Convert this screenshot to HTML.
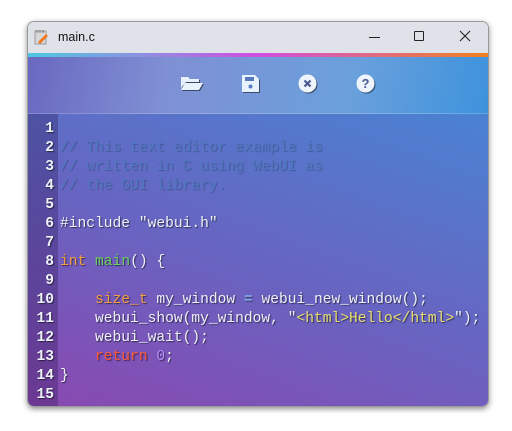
<!DOCTYPE html>
<html><head><style>
*{margin:0;padding:0;box-sizing:border-box}
body{width:512px;height:431px;background:#fff;position:relative;overflow:hidden;font-family:"Liberation Sans",sans-serif}
.win{position:absolute;left:27px;top:21px;width:462px;height:386px;border-radius:7px;overflow:hidden;box-shadow:0 2px 6px rgba(0,0,0,.45);border:1px solid #9a9a9a}
.title{position:absolute;left:0;top:0;width:100%;height:31px;background:#dfe2e8;font-size:12.5px;color:#111}
.title .t{position:absolute;left:30px;top:8px}
.bar{position:absolute;left:0;top:31px;width:100%;height:4px;background:linear-gradient(90deg,#4ec8e0,#8f8fe0 25%,#d04ee0 50%,#e06a80 75%,#f08020)}
.tool{position:absolute;left:0;top:35px;width:100%;height:57px;background:linear-gradient(100deg,#6a68c0 0%,#7f90d4 30%,#6aa0dc 70%,#3d92dc 100%);border-bottom:1px solid rgba(255,255,255,.2)}
.ed{position:absolute;left:0;top:92px;width:100%;height:294px;background:linear-gradient(20deg,#8a48b0 0%,#6a62c0 45%,#4a82d2 100%)}
.gut{position:absolute;left:0;top:0;width:30px;height:100%;background:rgba(40,20,80,.3)}
.code{position:absolute;left:0;top:6px;font-family:"Liberation Mono",monospace;font-size:14.6px;line-height:19px;color:#eef2fa;text-shadow:1px 1px 1px rgba(0,0,0,.55);white-space:pre}
.ln{display:inline-block;width:26px;text-align:right;margin-right:6px;font-weight:bold}
.c{color:#5078c0;text-shadow:1px 1px 1px rgba(0,0,0,.25)}
.k{color:#f2a044}.f{color:#6cd060}.r{color:#ff5a3a}.n{color:#b890ff}.s{color:#e8e070}.o{color:#8fd0ff}
.ic{position:absolute;top:17px}
</style></head><body>
<div class="win">
 <div class="title">
  <svg style="position:absolute;left:6px;top:7px" width="15" height="16" viewBox="0 0 15 16"><rect x="1" y="2" width="11" height="13" fill="#d8d8d8" stroke="#999"/><line x1="3" y1="1" x2="3" y2="4" stroke="#777"/><line x1="6" y1="1" x2="6" y2="4" stroke="#777"/><line x1="9" y1="1" x2="9" y2="4" stroke="#777"/><path d="M4 13 L12 5 L14 7 L6 15 Z" fill="#f07820"/></svg>
  <span class="t">main.c</span>
  <div style="position:absolute;left:341px;top:15px;width:11px;height:1px;background:#222"></div>
  <div style="position:absolute;left:386px;top:9px;width:10px;height:10px;border:1px solid #222;border-radius:1px"></div>
  <svg style="position:absolute;left:431px;top:8px" width="12" height="12"><path d="M1 1L11 11M11 1L1 11" stroke="#222" stroke-width="1.1"/></svg>
 </div>
 <div class="bar"></div>
 <div class="tool">
  <svg class="ic" style="left:152px" width="24" height="18" viewBox="0 0 24 18"><g fill="#e8f2fc" filter="drop-shadow(1px 1px 0 rgba(0,0,0,.5))"><path d="M1 3h7l2 2h9v3H6L1 14z"/><path d="M5 9h18l-4 7H1z"/></g></svg>
  <svg class="ic" style="left:213px" width="19" height="19" viewBox="0 0 19 19"><g filter="drop-shadow(1px 1px 0 rgba(0,0,0,.5))"><path d="M1 1h13l4 4v13H1z" fill="#e8f2fc"/><rect x="4" y="3" width="9" height="4" fill="#5a78c0"/><circle cx="9.5" cy="12.5" r="2" fill="#5a78c0"/></g></svg>
  <svg class="ic" style="left:270px" width="20" height="20" viewBox="0 0 20 20"><g filter="drop-shadow(1px 1px 0 rgba(0,0,0,.5))"><circle cx="9.5" cy="9.5" r="9" fill="#eef4fc"/><path d="M6.5 6.5l6 6M12.5 6.5l-6 6" stroke="#4a5a90" stroke-width="2.2"/></g></svg>
  <svg class="ic" style="left:328px" width="20" height="20" viewBox="0 0 20 20"><g filter="drop-shadow(1px 1px 0 rgba(0,0,0,.5))"><circle cx="9.5" cy="9.5" r="9" fill="#eef4fc"/><text x="9.5" y="14" text-anchor="middle" font-family="Liberation Sans" font-weight="bold" font-size="13" fill="#4a5a90">?</text></g></svg>
 </div>
 <div class="ed">
  <div class="gut"></div>
<div class="code"><span class="ln">1</span>
<span class="ln">2</span><span class="c">// This text editor example is</span>
<span class="ln">3</span><span class="c">// written in C using WebUI as</span>
<span class="ln">4</span><span class="c">// the GUI library.</span>
<span class="ln">5</span>
<span class="ln">6</span>#include "webui.h"
<span class="ln">7</span>
<span class="ln">8</span><span class="k">int</span> <span class="f">main</span>() {
<span class="ln">9</span>
<span class="ln">10</span>    <span class="k">size_t</span> my_window <span class="o">=</span> webui_new_window();
<span class="ln">11</span>    webui_show(my_window, "<span class="s">&lt;html&gt;Hello&lt;/html&gt;</span>");
<span class="ln">12</span>    webui_wait();
<span class="ln">13</span>    <span class="r">return</span> <span class="n">0</span>;
<span class="ln">14</span>}
<span class="ln">15</span></div>
 </div>
</div>
</body></html>
